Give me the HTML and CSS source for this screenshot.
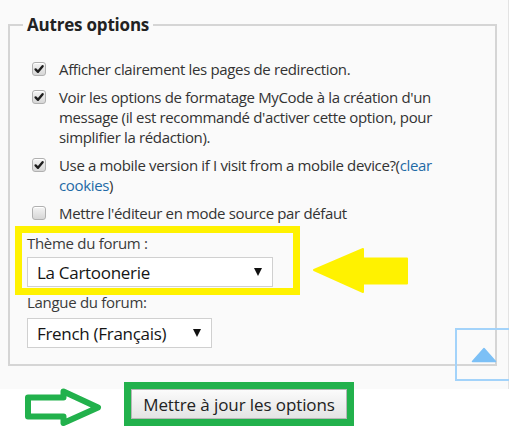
FILE: index.html
```html
<!DOCTYPE html>
<html lang="fr">
<head>
<meta charset="utf-8">
<title>Autres options</title>
<link rel="stylesheet" href="styles.css">
</head>
<body>
<div class="page">
  <div class="panel">
    <fieldset class="options">
      <legend>Autres options</legend>
      <div class="checks">
        <label class="check">
          <span class="cb on"><svg viewBox="0 0 14 14" width="14" height="14"><path d="M3.6 7.4 L6 9.8 L10.6 4.2" /></svg></span>
          <span class="txt">Afficher clairement les pages de redirection.</span>
        </label>
        <label class="check">
          <span class="cb on"><svg viewBox="0 0 14 14" width="14" height="14"><path d="M3.6 7.4 L6 9.8 L10.6 4.2" /></svg></span>
          <span class="txt">Voir les options de formatage MyCode à la création d'un<br>message (il est recommandé d'activer cette option, pour<br>simplifier la rédaction).</span>
        </label>
        <label class="check">
          <span class="cb on"><svg viewBox="0 0 14 14" width="14" height="14"><path d="M3.6 7.4 L6 9.8 L10.6 4.2" /></svg></span>
          <span class="txt">Use a mobile version if I visit from a mobile device?(<a class="link" href="#">clear<br>cookies</a>)</span>
        </label>
        <label class="check">
          <span class="cb"></span>
          <span class="txt">Mettre l'éditeur en mode source par défaut</span>
        </label>
      </div>
      <div class="field theme">
        <div class="flabel">Thème du forum :</div>
        <div class="select select-wide"><span>La Cartoonerie</span><svg class="caret" viewBox="0 0 8 8" width="8" height="8"><polygon points="0,0 8,0 4,8"/></svg></div>
        <svg class="yellow-arrow" viewBox="0 0 97 48" width="97" height="48"><polygon points="2,23 51,2 51,11.5 95,11.5 95,36.5 51,36.5 51,45"/></svg>
      </div>
      <div class="field lang">
        <div class="flabel">Langue du forum:</div>
        <div class="select select-narrow"><span>French (Français)</span><svg class="caret" viewBox="0 0 8 8" width="8" height="8"><polygon points="0,0 8,0 4,8"/></svg></div>
      </div>
    </fieldset>
  </div>
  <div class="actions">
    <svg class="green-arrow" viewBox="0 0 80 42" width="80" height="42"><polygon points="4,10.5 39.5,10.5 39.5,4.5 74,20.5 39.5,36 39.5,29.5 4,29.5"/></svg>
    <button class="submit" type="button">Mettre à jour les options</button>
  </div>
  <a class="scrolltop" href="#"><svg viewBox="0 0 26 16" width="26" height="16"><polygon points="13,1.5 24.5,14.5 1.5,14.5"/></svg></a>
</div>
</body>
</html>
```

FILE: styles.css
```css
html, body {
  margin: 0;
  padding: 0;
  background: #ffffff;
}

body {
  font-family: "Open Sans", "Noto Sans", "DejaVu Sans", sans-serif;
  font-size: 15px;
  color: #333333;
}

.page {
  width: 509px;
  height: 429px;
  overflow: hidden;
}

.panel {
  width: 489px;
  height: 374px;
  padding: 15px 11px 0 8px;
  background: #fafafa;
  border-right: 1px solid #e3e3e3;
}

.options {
  margin: 0;
  padding: 24px 17px 16px 17px;
  border: 2px solid #d5d5d5;
  min-width: 0;
}

.options legend {
  margin-left: -4px;
  padding: 0 4px;
  font-size: 17px;
  line-height: 20px;
  font-weight: 700;
  color: #222222;
  letter-spacing: -0.2px;
}

.checks {
  display: flex;
  flex-direction: column;
  gap: 8px;
  padding-left: 5px;
}

.check {
  display: flex;
  align-items: flex-start;
  gap: 13px;
  line-height: 20px;
  letter-spacing: -0.35px;
  cursor: pointer;
}

.cb {
  flex: none;
  width: 12px;
  height: 12px;
  margin-top: 3px;
  border: 1px solid #b0b0b0;
  border-radius: 3px;
  background: linear-gradient(#f4f4f4, #d6d6d6);
  box-shadow: inset 0 1px 0 #ffffff;
  position: relative;
}

.cb svg {
  position: absolute;
  left: -1px;
  top: -1px;
}

.cb svg path {
  fill: none;
  stroke: #1e1e1e;
  stroke-width: 2.4;
  stroke-linecap: round;
  stroke-linejoin: round;
}

.link {
  color: #1f6aa6;
  text-decoration: none;
}

.field {
  display: flex;
  flex-direction: column;
  align-items: flex-start;
}

.theme {
  margin-top: 10px;
  position: relative;
}

.theme::before {
  content: "";
  position: absolute;
  left: -12px;
  top: -7px;
  width: 271px;
  height: 55px;
  border: 7px solid #fff200;
  pointer-events: none;
}

.lang {
  margin-top: 5px;
}

.flabel {
  line-height: 20px;
  letter-spacing: -0.3px;
  color: #3a3a3a;
}

.select {
  box-sizing: border-box;
  height: 30px;
  margin-top: 4px;
  padding: 0 10px 0 9px;
  display: flex;
  align-items: center;
  justify-content: space-between;
  background: #ffffff;
  border: 1px solid #d0d0d0;
  font-size: 17px;
  color: #151515;
  letter-spacing: -0.3px;
}

.select-wide {
  width: 246px;
}

.select-narrow {
  width: 185px;
  margin-top: 6px;
}

.caret polygon {
  fill: #111111;
}

.yellow-arrow {
  position: absolute;
  left: 285px;
  top: 14px;
}

.yellow-arrow polygon {
  fill: #fff200;
  stroke: #fff200;
  stroke-width: 2;
  stroke-linejoin: round;
}

.actions {
  display: flex;
  align-items: flex-start;
  padding-left: 24px;
  margin-top: -4px;
}

.green-arrow {
  flex: none;
  margin-top: 2px;
}

.green-arrow polygon {
  fill: #ffffff;
  stroke: #22b14c;
  stroke-width: 6;
  stroke-linejoin: round;
}

.submit {
  box-sizing: border-box;
  width: 216px;
  height: 30px;
  margin-left: 27px;
  margin-top: 4px;
  padding: 0;
  font-family: inherit;
  font-size: 17px;
  letter-spacing: -0.1px;
  color: #222222;
  background: linear-gradient(#fbfbfb, #e4e4e4);
  border: 1px solid #b7b7b7;
  border-radius: 0;
  outline: 7px solid #22b14c;
  outline-offset: 0;
}

.scrolltop {
  position: fixed;
  left: 455px;
  top: 328px;
  width: 60px;
  height: 53px;
  border: 2px solid #a3d3fa;
  display: flex;
  align-items: flex-start;
  justify-content: flex-start;
  padding: 17px 0 0 14px;
  box-sizing: border-box;
}

.scrolltop svg polygon {
  fill: #7cc0f6;
  stroke: #7cc0f6;
  stroke-width: 1.5;
  stroke-linejoin: round;
}
```
